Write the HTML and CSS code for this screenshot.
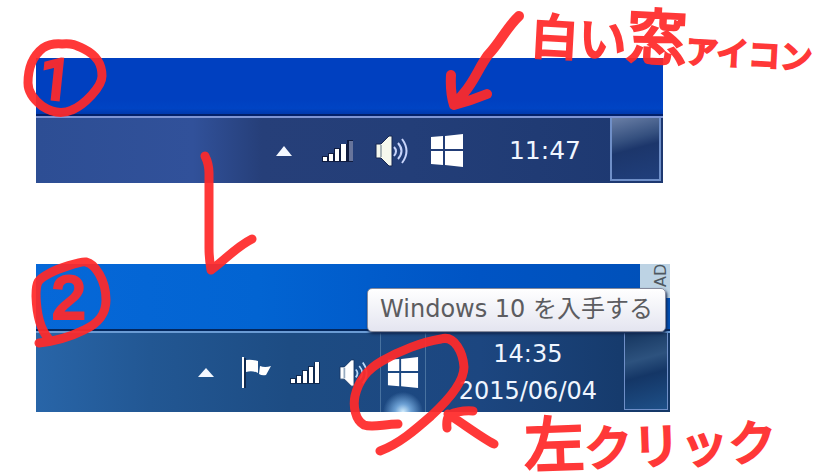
FILE: index.html
```
<!DOCTYPE html>
<html lang="ja">
<head>
  <meta charset="UTF-8" />
  <title>Windows 10 を入手する</title>
  <link rel="stylesheet" href="styles.css">
</head>
<body>
  <!-- Step 1: the tray icon -->
  <section class="step step-one">
    <div class="desktop"></div>
    <div class="taskbar">
      <button class="tray-button arrow" aria-label="tray">
        <svg width="18" height="12" viewBox="0 0 18 12"><path d="M1 11L9 1L17 11Z" fill="#f4f8ff"/></svg>
      </button>
      <button class="tray-button" aria-label="network">
        <svg width="32" height="24" viewBox="0 0 32 24">
          <path d="M0 17h6v6H0zM6 14h6v9H6zM12 9h6v14h-6zM18 5h7v18h-7zM25 1h6v22h-6z" fill="#101c40"/>
          <path d="M1 18h4v4H1zM7 15h4v7H7zM13 10h4v12h-4zM19 5h5v17h-5z" fill="#fff"/>
          <path d="M27 2h4v20h-4z" fill="#67749b"/>
        </svg>
      </button>
      <button class="tray-button" aria-label="volume">
        <svg width="34" height="32" viewBox="0 0 34 32">
          <path d="M1 9h5L14 1h3v30h-3L6 23H1z" fill="#f5f8ee" stroke="#172650"/>
          <path d="M6 10v12" stroke="#a9b5b9" stroke-width="2"/>
          <path d="M19 12q4 4 0 9M23 8q7 8 0 16M27 4q9 12 0 24" fill="none" stroke="#c8d4fa" stroke-width="2"/>
        </svg>
      </button>
      <button class="tray-button" aria-label="Windows">
        <svg width="34" height="34" viewBox="0 0 34 34"><path d="M1 3L13 2V15H1zM15 2L33 0V15H15zM1 17H13V31L1 30zM15 17H33V33L15 31z" fill="#fff"/></svg>
      </button>
      <time class="clock">11:47</time>
      <button class="show-desktop" aria-label="desktop"></button>
    </div>

    <svg class="mark circle-one" width="90" height="80" viewBox="20 38 90 80">
      <path d="M62 44C72 43 76 45 84 49C98 56 102 65 102 76C102 87 84 105 72 110C61 115 51 112 42 106C33 99 28 92 28 83C28 65 34 55 43 48Q51 43 62 44"/>
    </svg>
    <span class="number number-one">1</span>
    <svg class="mark arrow-down" width="60" height="130" viewBox="200 150 60 130">
      <path d="M205 156Q209 164 209 173V248Q209 258 211 270C225 260 236 247 252 239"/>
    </svg>
    <svg class="mark arrow-icon" width="90" height="120" viewBox="440 0 90 120">
      <path class="thick" d="M519 16C506 28 500 43 488 55C478 69 475 80 464 93L454 105M451 75Q450 92 454 105Q470 101 487 94"/>
    </svg>
    <p class="note note-one"><span class="medium">白い</span><span class="large">窓</span><span class="small">アイコン</span></p>
  </section>

  <!-- Step 2: the tooltip on the icon -->
  <section class="step step-two">
    <div class="desktop"><span class="gadget">AD</span></div>
    <div class="taskbar">
      <button class="tray-button arrow" aria-label="tray">
        <svg width="16" height="10" viewBox="0 0 16 10"><path d="M0 9L8 0L16 9Z" fill="#f4f8ff"/></svg>
      </button>
      <button class="tray-button" aria-label="flag">
        <svg width="30" height="32" viewBox="0 0 30 32">
          <path d="M3 1v30" stroke="#102a50" stroke-width="4"/>
          <path d="M1 0h2v31H1zM5 3q5-1 12 1v12q-6-3-12-1zM19 9q5 2 11 0L25 18q-4 1-7-1z" fill="#fff"/>
        </svg>
      </button>
      <button class="tray-button" aria-label="network">
        <svg width="30" height="24" viewBox="0 0 30 24">
          <path d="M0 17h6v6H0zM6 14h6v9H6zM12 9h6v14h-6zM18 5h6v18h-6zM24 1h6v22h-6z" fill="#102a50"/>
          <path d="M1 18h4v4H1zM7 15h4v7H7zM13 10h4v12h-4zM19 6h4v16h-4zM25 1h4v21h-4z" fill="#fff"/>
        </svg>
      </button>
      <button class="tray-button" aria-label="volume">
        <svg width="30" height="28" viewBox="0 0 34 32">
          <path d="M1 9h5L14 1h3v30h-3L6 23H1z" fill="#fff" stroke="#173765"/>
          <path d="M6 10v12" stroke="#96aabf" stroke-width="2"/>
          <path d="M19 12q4 4 0 9M23 8q7 8 0 16M27 4q9 12 0 24" fill="none" stroke="#bad8f8" stroke-width="2"/>
        </svg>
      </button>
      <button class="tray-button active" aria-label="Windows 10 を入手する">
        <svg width="32" height="32" viewBox="0 0 34 34"><path d="M1 3L13 2V15H1zM15 2L33 0V15H15zM1 17H13V31L1 30zM15 17H33V33L15 31z" fill="#fff"/></svg>
      </button>
      <time class="clock">14:35<br>2015/06/04</time>
      <button class="show-desktop" aria-label="desktop"></button>
    </div>
    <div class="tooltip">Windows 10 を入手する</div>

    <svg class="mark circle-two" width="90" height="100" viewBox="28 252 90 100">
      <path d="M39 343C57 341 70 337 84 330C99 323 106 314 106 300C106 280 95 264 86 262C81 261 57 269 50 273C37 280 36 282 36 296Q37 325 48 338"/>
    </svg>
    <span class="number number-two">2</span>
    <svg class="mark circle-icon" width="160" height="130" viewBox="345 330 160 130">
      <path d="M398 424C384 424 373 428 364 425C355 420 353 406 355 396C359 379 368 369 382 361C399 351 422 342 441 339C455 335 463 353 464 367C464 384 443 405 431 416C415 430 399 444 380 451"/>
      <path d="M494 444C482 438 465 425 448 414M447 428Q446 420 449 415Q460 410 473 411"/>
    </svg>
    <p class="note note-two"><span class="large">左</span><span class="medium">クリック</span></p>
  </section>
</body>
</html>
```

FILE: styles.css
```
body {
  margin: 0;
  padding: 58px 146px 60px 36px;
  background: #fff;
  font-family: "DejaVu Sans", "Noto Sans CJK JP", sans-serif;
}

.step {
  position: relative;
}

.step-one {
  z-index: 1;
  margin-right: 7px;
  margin-bottom: 81px;
}

.desktop {
  box-sizing: border-box;
  height: 58px;
  background: linear-gradient(#0040c0 75%, #0044c4 90%, #0038ac);
  border-bottom: 2px solid #02206a;
}

.step-two .desktop {
  display: flex;
  justify-content: flex-end;
  height: 67px;
  background: linear-gradient(90deg, #0668d8, #0264d2 35%, #0054c4 70%, #0050b8);
  border-bottom-color: #03275e;
}

.taskbar {
  display: flex;
  align-items: center;
  justify-content: flex-end;
  gap: 21px;
  box-sizing: border-box;
  height: 67px;
  padding-right: 2px;
  border-top: 2px solid #7d94d4;
  background: linear-gradient(90deg, #2d4e94, #31519a 25%, #263f79 36%, #233e78 60%, #1d3870);
  color: #f0f6ff;
}

.step-two .taskbar {
  gap: 19px;
  height: 81px;
  border-top-color: #6a9bd4;
  background: linear-gradient(90deg, #2865a8, #225793 18%, #1d4c83 40%, #1c4680 70%, #143766);
}

button {
  flex: none;
  padding: 0;
  border: none;
  background: none;
  cursor: pointer;
}

.tray-button svg {
  display: block;
}

.arrow {
  margin-right: 8px;
}

.active {
  display: flex;
  align-items: center;
  justify-content: center;
  align-self: stretch;
  box-sizing: border-box;
  width: 46px;
  margin-left: -8px;
  border-left: 1px solid #4872a0;
  border-right: 1px solid #4872a0;
  background: radial-gradient(circle at 50% 100%, #d5efff, #6ca0d4 8px, transparent 20px);
}

.clock {
  margin-left: 24px;
  margin-right: 8px;
  font-size: 25px;
  line-height: 37px;
  text-align: center;
}

.step-two .clock {
  margin-left: 14px;
  margin-right: 8px;
  font-size: 24px;
}

.show-desktop {
  align-self: stretch;
  box-sizing: border-box;
  width: 51px;
  margin-bottom: 2px;
  border: 2px solid #6f8fc8;
  border-top: none;
  background: linear-gradient(165deg, #6a7fa6, #35507f 35%, #1c366b 50%, #203f7c);
}

.step-two .show-desktop {
  width: 44px;
  border-width: 1px;
  background: linear-gradient(165deg, #15355f, #2d527e 35%, #143666 55%, #1e5088);
}

.gadget {
  box-sizing: border-box;
  width: 30px;
  height: 34px;
  padding-right: 12px;
  background: #bdd3e4;
  color: #4e5860;
  font-size: 16px;
  line-height: 18px;
  text-align: right;
  writing-mode: vertical-rl;
  transform: rotate(180deg);
}

.tooltip {
  position: absolute;
  top: 24px;
  right: 4px;
  box-sizing: border-box;
  height: 44px;
  padding: 0 12px;
  border: 1px solid #868a9c;
  border-radius: 5px;
  background: linear-gradient(#fff, #e4e5f0);
  box-shadow: 1px 2px 3px #10254c;
  color: #5c5c60;
  font-size: 24px;
  line-height: 40px;
  white-space: nowrap;
}

/* Red pen marks */
.mark {
  position: absolute;
  fill: none;
  stroke: #ff2a2a;
  stroke-width: 9px;
  stroke-linecap: round;
  stroke-linejoin: round;
  opacity: 0.93;
}

.thick {
  stroke-width: 10px;
}

.circle-one {
  top: -20px;
  left: -16px;
}

.arrow-down {
  top: 92px;
  left: 164px;
}

.arrow-icon {
  top: -58px;
  right: 133px;
}

.circle-two {
  top: -12px;
  left: -8px;
}

.circle-icon {
  top: 66px;
  right: 165px;
}

.number,
.note {
  position: absolute;
  margin: 0;
  color: #ff2a2a;
  white-space: nowrap;
  opacity: 0.93;
}

.number {
  font-family: "Liberation Sans", sans-serif;
  font-size: 60px;
  line-height: 64px;
  -webkit-text-stroke: 4px #ff2a2a;
}

.number-one {
  top: -10px;
  left: 4px;
  font-family: Roboto, sans-serif;
  font-size: 56px;
  transform: rotate(6deg);
}

.number-two {
  top: 2px;
  left: 16px;
}

.note {
  display: flex;
  align-items: flex-end;
  font-family: "Noto Sans CJK JP", sans-serif;
  line-height: 1;
  -webkit-text-stroke: 3px #ff2a2a;
}

.note-one {
  top: -54px;
  right: -150px;
  transform: rotate(3deg);
}

.note-two {
  top: 143px;
  right: -106px;
  transform: rotate(-2deg);
}

.small {
  font-size: 32px;
}

.medium {
  font-size: 48px;
}

.large {
  font-size: 60px;
}
```
